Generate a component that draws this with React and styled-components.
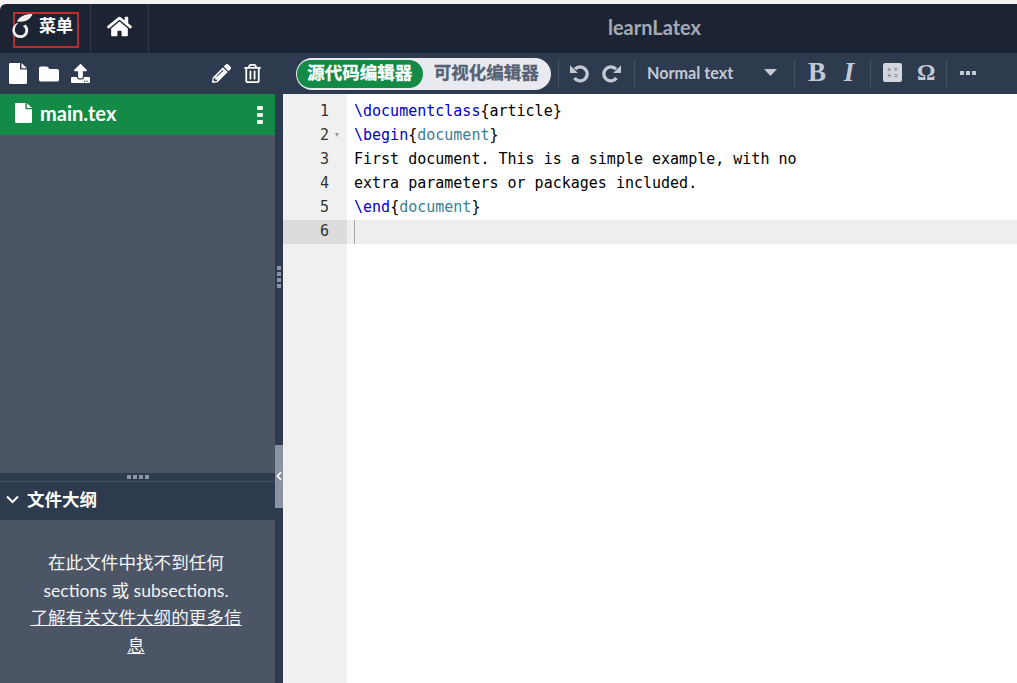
import React from "react";
import styled, { createGlobalStyle } from "styled-components";
import { FaFolder, FaUpload, FaPencilAlt, FaRegTrashAlt, FaHome, FaChevronLeft } from "react-icons/fa";

const Global = createGlobalStyle`
  html, body { margin: 0; padding: 0; height: 100%; background: #f2f2f2; overflow: hidden; }
  #root { height: 100%; }
  * { box-sizing: border-box; }
`;

const Page = styled.div`
  width: 1017px; height: 683px; padding-top: 4px; display: flex; flex-direction: column;
  font-family: Lato, "Noto Sans CJK SC", sans-serif; color: #fff; overflow: hidden;
`;
const TopBar = styled.header`
  height: 49px; flex: none; display: flex; background: #1c2433; border-top-left-radius: 6px;
`;
const MenuCell = styled.div`
  width: 91px; padding: 8px 0 0 13px; border-right: 1px solid #303a4a;
`;
const MenuBox = styled.div`
  width: 66px; height: 36px; border: 2px solid #c9262c; display: flex; align-items: flex-start; padding-top: 3px; gap: 6px;
`;
const LogoMark = styled.svg`
  width: 22px; height: 27px; margin: -4px 0 0 -4px; flex: none;
`;
const MenuLabel = styled.span`
  font-size: 17px; font-weight: 700; line-height: 22px; white-space: nowrap; margin-top: -2px;
`;
const HomeCell = styled.div`
  width: 58px; display: flex; align-items: flex-start; justify-content: center; padding-top: 10px; border-right: 1px solid #303a4a; font-size: 25px;
`;
const Title = styled.div`
  flex: 1; padding: 11px 0 0 143px; text-align: center; font-size: 20px; line-height: 24px; font-weight: 700; color: #a3aab6;
`;
const ToolRow = styled.div`
  height: 41px; flex: none; display: flex; background: #2e3a4e;
`;
const FileTools = styled.div`
  width: 283px; flex: none; display: flex; align-items: center; padding: 0 21px 0 9px; font-size: 19px; gap: 12px;
`;
const Spacer = styled.div`flex: 1;`;
const EditorTools = styled.div`
  flex: 1; display: flex; align-items: center; padding-left: 13px; color: #c3cad5; padding-bottom: 2px;
`;
const Toggle = styled.div`
  width: 255px; height: 32px; padding: 2px 1px; background: #e8eaef; border-radius: 16px; display: flex; align-items: center; font-size: 17.5px; font-weight: 700; margin-top: 2px; flex: none; -webkit-text-stroke: 0.3px currentColor;
`;
const ToggleOption = styled.div`
  height: 28px; line-height: 26px; border-radius: 14px; text-align: center; white-space: nowrap;
  width: ${p => (p.$active ? "126px" : "128px")};
  background: ${p => (p.$active ? "#138a45" : "transparent")};
  color: ${p => (p.$active ? "#fff" : "#566173")};
`;
const Divider = styled.span`
  width: 1px; height: 28px; background: #465265; flex: none; margin: ${p => p.$m || "0"};
`;
const HistoryIcon = styled.svg`
  width: 20px; height: 20px; flex: none; margin: ${p => p.$m || "0"}; transform: ${p => (p.$flip ? "scaleX(-1)" : "none")};
`;
const StyleSelect = styled.div`
  display: flex; align-items: center; width: 131px; margin-left: 12px; font-size: 16.2px; font-weight: 700; white-space: nowrap; justify-content: space-between; flex: none;
`;
const SerifGlyph = styled.span`
  font-family: "Liberation Serif", serif; font-weight: 700; font-style: ${p => (p.$i ? "italic" : "normal")}; font-size: 27px; width: ${p => p.$w}px; margin: ${p => p.$m || "0"}; text-align: center; line-height: 1; flex: none;
`;
const MathBox = styled.span`
  width: 19px; height: 19px; background: #d3d6dc; border-radius: 2px; flex: none; margin: 0 15px 0 12px; display: flex; align-items: center; justify-content: center;
`;
const Omega = styled.span`
  font-family: "Liberation Serif", serif; font-weight: 700; font-size: 23px; line-height: 1; width: 17px; text-align: center; flex: none; margin-right: 12px;
`;
const DotRow = styled.span`
  display: flex; gap: 2px; margin-left: 13px; flex: none;
`;
const SquareDot = styled.i`
  width: 4px; height: 4px; background: #c3cad5; display: block;
`;
const Main = styled.div`
  flex: 1; min-height: 0; display: flex;
`;
const Sidebar = styled.aside`
  width: 275px; flex: none; display: flex; flex-direction: column; background: #4b5565;
`;
const FileTree = styled.div`
  flex: 1; min-height: 0;
`;
const FileRow = styled.div`
  height: 41px; background: #138a45; display: flex; align-items: center; padding: 0 12px 3px 15px; font-size: 20px; font-weight: 700; gap: 8px;
`;
const FileName = styled.span`flex: 1;`;
const Kebab = styled.span`
  display: flex; flex-direction: column; gap: 3px; flex: none; margin-top: 3px;
`;
const KebabDot = styled.i`
  width: 6px; height: 4px; background: #f1f6f3; border-radius: 1px; display: block;
`;
const HSplit = styled.div`
  height: 9px; flex: none; background: #2e3a4e; border-bottom: 1px solid #465265; display: flex; justify-content: center; align-items: center; gap: 2px; padding-bottom: 1px;
`;
const HDot = styled.i`
  width: 4px; height: 4px; background: #8b94a3; display: block;
`;
const OutlineHeader = styled.div`
  height: 38px; flex: none; background: #2e3a4e; display: flex; align-items: center; padding: 0 0 6px 6px; gap: 8px; font-size: 17.5px; font-weight: 700;
`;
const OutlineBody = styled.div`
  height: 163px; flex: none; padding: 29px 29px 0 26px; text-align: center; font-size: 17.6px; line-height: 27.5px; color: #f2f4f7; font-weight: 400;
`;
const OutlineLink = styled.a`
  color: inherit; text-decoration: underline; display: block;
`;
const VSplit = styled.div`
  width: 8px; flex: none; background: #2e3a4e; display: flex; flex-direction: column; align-items: center; padding-top: 172px;
`;
const VDot = styled.i`
  width: 4px; height: 4px; background: #8b94a3; display: block; margin-bottom: 2px;
`;
const Collapse = styled.div`
  width: 8px; height: 63px; flex: none; margin-top: 155px; padding-bottom: 2px; background: #8b93a3; display: flex; align-items: center; justify-content: center; font-size: 10px; color: #fff;
`;
const Editor = styled.main`
  flex: 1; min-width: 0; display: flex; background: #fff; font-family: "DejaVu Sans Mono", monospace; font-size: 15px; line-height: 22px;
`;
const Gutter = styled.div`
  width: 64px; flex: none; background: #f0f0f0; padding-top: 6px; color: #333;
`;
const GutterCell = styled.div`
  height: 24px; display: flex; align-items: flex-start; justify-content: flex-end; padding-right: 18px; position: relative; background: ${p => (p.$active ? "#dcdcdc" : "transparent")};
`;
const FoldMark = styled.span`
  position: absolute; right: 8px; top: 9px; width: 0; height: 0; border-left: 2.5px solid transparent; border-right: 2.5px solid transparent; border-top: 4px solid #999;
`;
const Code = styled.div`
  flex: 1; min-width: 0; padding-top: 6px; color: #000;
`;
const CodeLine = styled.div`
  height: 24px; padding-left: 7px; white-space: pre; background: ${p => (p.$active ? "#eeeeee" : "transparent")}; position: relative;
`;
const Cmd = styled.span`color: #0000cd;`;
const Arg = styled.span`color: #3a7f93;`;
const Caret = styled.span`
  position: absolute; left: 7px; top: 0; width: 1px; height: 24px; background: #a8a8a8;
`;

const Logo = () => (
  <LogoMark viewBox="0 0 22 27" aria-hidden="true">
    <path d="M6 8.500C8 3.500 14 1 21.500 1 20 5.500 15 10 6 8.500Z" fill="#f0f0f0" />
    <path d="M7 9.800C3.500 11 1.400 14 1.400 17.500c0 4.300 3.500 7.500 7.800 7.500 4.600 0 8-3.300 8-7.600 0-2.400-1-4.400-2.600-5.800-1 .7-2 1.200-3 1.500 1.700 1 2.700 2.500 2.700 4.300 0 2.700-2.200 4.800-5 4.800-2.900 0-5.400-2-5.400-5.200 0-2.700 1.200-5 3.100-6.500Z" fill="#f0f0f0" />
  </LogoMark>
);

const FileGlyph = ({ w, h }) => (
  <svg width={w} height={h} viewBox="0 0 18 21" fill="#fff" aria-hidden="true" style={{ flex: "none" }}>
    <path d="M0 1.200C0 .5.500 0 1.200 0H11v6.500h7V19.800c0 .7-.5 1.200-1.200 1.200H1.200C.5 21 0 20.500 0 19.800Z" />
    <path d="M12.500 0 18 5.200h-5.500Z" />
  </svg>
);

const History = ({ flip, m }) => (
  <HistoryIcon viewBox="0 0 20 20" $flip={flip} $m={m} fill="none" aria-hidden="true">
    <path d="M6 6.200A7 7 0 1 1 5.500 15" stroke="currentColor" strokeWidth="3.300" />
    <path d="M1 2.200V10h7.800Z" fill="currentColor" />
  </HistoryIcon>
);

const lines = [
  <><Cmd>\documentclass</Cmd>{"{article}"}</>,
  <><Cmd>\begin</Cmd>{"{"}<Arg>document</Arg>{"}"}</>,
  "First document. This is a simple example, with no",
  "extra parameters or packages included.",
  <><Cmd>\end</Cmd>{"{"}<Arg>document</Arg>{"}"}</>,
  null,
];

export default function App() {
  return (
    <Page>
      <Global />
      <TopBar>
        <MenuCell>
          <MenuBox>
            <Logo />
            <MenuLabel>菜单</MenuLabel>
          </MenuBox>
        </MenuCell>
        <HomeCell><FaHome /></HomeCell>
        <Title>learnLatex</Title>
      </TopBar>
      <ToolRow>
        <FileTools>
          <FileGlyph w={18} h={21} />
          <FaFolder style={{ fontSize: 20 }} />
          <FaUpload />
          <Spacer />
          <FaPencilAlt />
          <FaRegTrashAlt />
        </FileTools>
        <EditorTools>
          <Toggle>
            <ToggleOption $active>源代码编辑器</ToggleOption>
            <ToggleOption>可视化编辑器</ToggleOption>
          </Toggle>
          <Divider $m="0 10px 0 7px" />
          <History />
          <History flip m="0 12px 0 13px" />
          <Divider />
          <StyleSelect>
            Normal text
            <svg width="13" height="7" viewBox="0 0 13 7" aria-hidden="true" style={{ marginRight: 1 }}>
              <path d="M0 0h13L6.500 7Z" fill="currentColor" />
            </svg>
          </StyleSelect>
          <Divider $m="0 0 0 16px" />
          <SerifGlyph $w={18} $m="0 0 0 13px">B</SerifGlyph>
          <SerifGlyph $i $w={14} $m="0 0 0 16px">I</SerifGlyph>
          <Divider $m="0 0 0 14px" />
          <MathBox>
            <svg width="13" height="13" viewBox="0 0 13 13" aria-hidden="true" fill="none" stroke="#868d9b" strokeWidth="1.200">
              <path d="M1.500 3.500h3.500M3.200 1.800v3.500M8.500 2l2.500 2.500M11 2 8.500 4.500M1.500 9.500h3.500M3.200 7.800v3.500M8.500 8.500h3M8.500 10.500h3" />
            </svg>
          </MathBox>
          <Omega>Ω</Omega>
          <Divider />
          <DotRow><SquareDot /><SquareDot /><SquareDot /></DotRow>
        </EditorTools>
      </ToolRow>
      <Main>
        <Sidebar>
          <FileTree>
            <FileRow>
              <FileGlyph w={17} h={20} />
              <FileName>main.tex</FileName>
              <Kebab><KebabDot /><KebabDot /><KebabDot /></Kebab>
            </FileRow>
          </FileTree>
          <HSplit><HDot /><HDot /><HDot /><HDot /></HSplit>
          <OutlineHeader>
            <svg width="13" height="9" viewBox="0 0 13 9" fill="none" stroke="#fff" strokeWidth="2" aria-hidden="true" style={{ flex: "none", marginTop: 3 }}>
              <path d="M1 1.500 6.500 7 12 1.500" />
            </svg>
            <span>文件大纲</span>
          </OutlineHeader>
          <OutlineBody>
            在此文件中找不到任何 sections 或 subsections.
            <OutlineLink>了解有关文件大纲的更多信息</OutlineLink>
          </OutlineBody>
        </Sidebar>
        <VSplit>
          <VDot /><VDot /><VDot /><VDot />
          <Collapse><FaChevronLeft /></Collapse>
        </VSplit>
        <Editor>
          <Gutter>
            {lines.map((_, i) => (
              <GutterCell key={i} $active={i === 5}>
                {i + 1}
                {i === 1 && <FoldMark />}
              </GutterCell>
            ))}
          </Gutter>
          <Code>
            {lines.map((l, i) => (
              <CodeLine key={i} $active={i === 5}>
                {l}
                {i === 5 && <Caret />}
              </CodeLine>
            ))}
          </Code>
        </Editor>
      </Main>
    </Page>
  );
}
